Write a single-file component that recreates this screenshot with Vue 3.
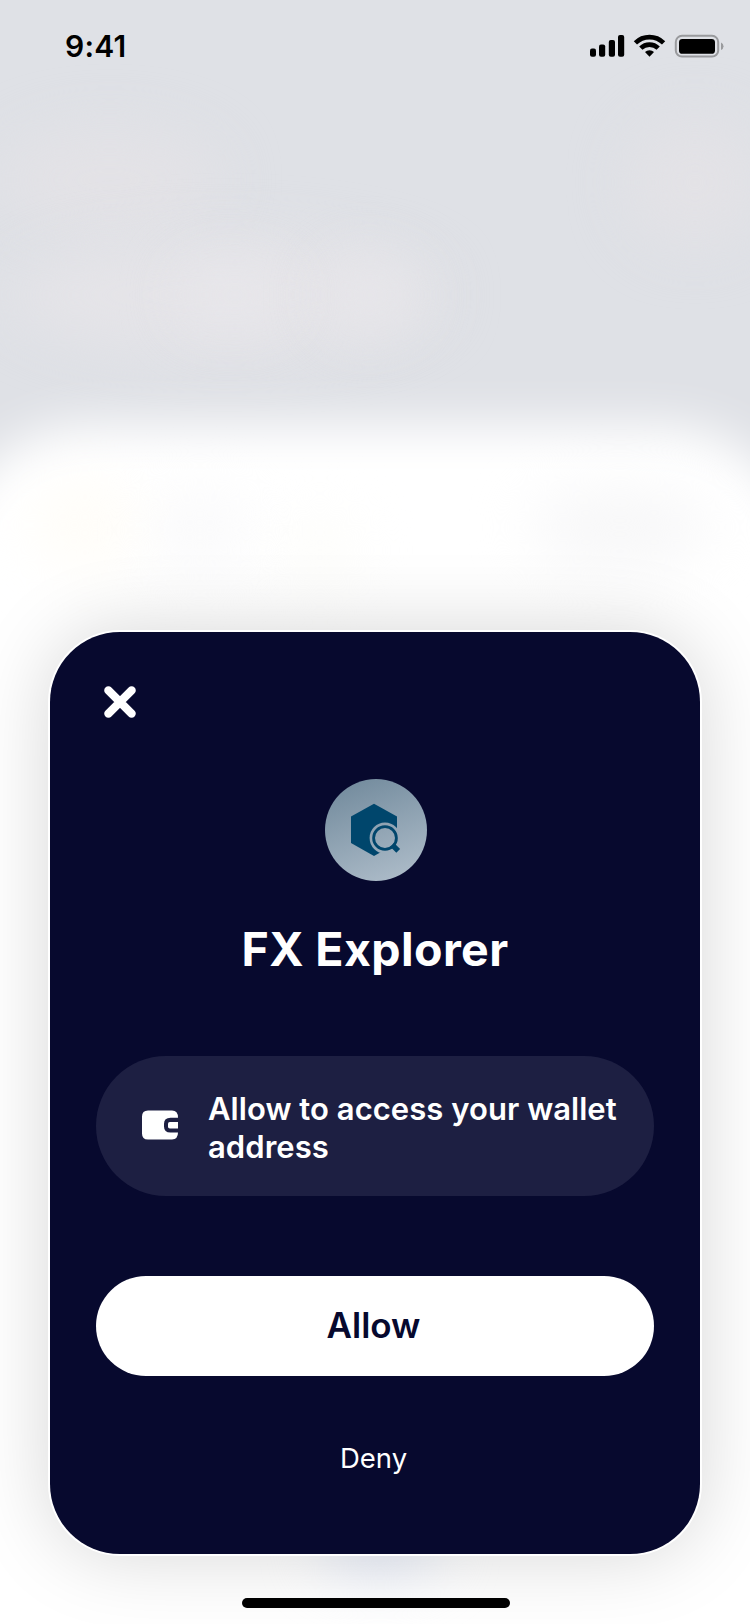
<script setup>
const title = 'FX Explorer'
</script>

<template>
  <main class="screen">
    <div class="backdrop">
      <i class="glow g1"></i><i class="glow g2"></i><i class="glow g3"></i>
      <i class="glow g4"></i><i class="glow g5"></i>
      <div class="sheet"></div>
      <i class="glow s1"></i><i class="glow s2"></i><i class="glow s3"></i><i class="glow s4"></i>
      <i class="glow s5"></i>
    </div>

    <header class="status">
      <span class="time">9:41</span>
      <svg class="indicators" width="136" height="24" viewBox="0 0 136 24">
        <rect x="0" y="14.5" width="6" height="8.2" rx="2" />
        <rect x="9" y="10.5" width="6.2" height="12.2" rx="2" />
        <rect x="18.8" y="6" width="6.2" height="16.7" rx="2" />
        <rect x="28" y="1" width="6.2" height="21.7" rx="2" />
        <g fill="none" stroke="#000" stroke-width="4.6">
          <path d="M45.4 8.9a20 20 0 0 1 28.2 0" />
          <path d="M50.8 14.2a12.3 12.3 0 0 1 17.4 0" />
        </g>
        <path d="M59.5 22.8l-4.5-4.7a6.5 6.5 0 0 1 9 0z" />
        <rect x="85.8" y="1.8" width="42.4" height="20.8" rx="6.2" fill="none" stroke="#999a9d" stroke-width="2" />
        <rect x="89" y="5" width="36" height="14.8" rx="3.4" />
        <path d="M131 8.4q2.5 1.1 2.5 3.8t-2.5 3.8z" fill="#999a9d" />
      </svg>
    </header>

    <section class="card">
      <button class="close" aria-label="Close">
        <svg width="34" height="34" viewBox="0 0 34 34">
          <path d="M5.4 5.4l23.2 23.2M28.6 5.4L5.4 28.6" stroke="#fff" stroke-width="8.4" stroke-linecap="round" />
        </svg>
      </button>
      <svg class="logo" width="102" height="102" viewBox="0 0 102 102">
        <defs>
          <linearGradient id="disc" x1="0.3" y1="0" x2="0.7" y2="1">
            <stop offset="0" stop-color="#748c9e" />
            <stop offset="1" stop-color="#acbbc8" />
          </linearGradient>
          <mask id="lens">
            <rect width="102" height="102" fill="#fff" />
            <circle cx="60" cy="59" r="15.4" fill="#000" />
            <path d="M67 66L82 82H58V72z" fill="#000" />
          </mask>
        </defs>
        <circle cx="51" cy="51" r="51" fill="url(#disc)" />
        <path d="M49 24.8L72 37.5V64L49 77L26 64V37.5z" fill="#00466c" mask="url(#lens)" />
        <circle cx="60" cy="59" r="11.4" fill="none" stroke="#00466c" stroke-width="2.8" />
        <path d="M67.2 65.8l6 6" stroke="#00466c" stroke-width="5.4" />
      </svg>
      <h1>{{ title }}</h1>

      <div class="permission">
        <svg width="36" height="30" viewBox="0 0 36 30">
          <path d="M6 .6H30Q36 .6 36 7.8H28.5Q22 7.8 22 14V16.5Q22 22.6 28.5 22.6H36Q36 29.4 30 29.4H6Q0 29.4 0 23.4V6.6Q0 .6 6 .6z" fill="#fff" />
          <path d="M36 12H27.8Q26 12 26 13.8V16.8Q26 18.6 27.8 18.6H36z" fill="#fff" />
        </svg>
        <p>Allow to access your wallet<br />address</p>
      </div>

      <button class="allow"><span>Allow</span></button>
      <button class="deny"><span>Deny</span></button>
    </section>
    <div class="home"></div>
  </main>
</template>

<style>
body { margin: 0; }
</style>

<style scoped>
.screen {
  position: relative;
  box-sizing: border-box;
  width: 750px;
  height: 1624px;
  overflow: hidden;
  background: #fff;
  font-family: Inter, "Open Sans", sans-serif;
  display: flex;
  flex-direction: column;
  align-items: center;
}
.backdrop { position: absolute; inset: 0; background: #dfe1e6; overflow: hidden; }
.sheet {
  position: absolute;
  left: -60px;
  right: -60px;
  top: 425px;
  height: 1400px;
  border-radius: 150px 150px 0 0;
  background: #fff;
  filter: blur(25px);
}
.glow { position: absolute; border-radius: 50%; filter: blur(28px); }
.g1 { left: 0; top: 130px; width: 220px; height: 100px; background: #e3e2e6; }
.g2 { left: 630px; top: 120px; width: 130px; height: 125px; background: #e3e2e6; }
.g3 { left: 10px; top: 240px; width: 430px; height: 110px; background: #e5e4e8; }
.g4 { left: 180px; top: 265px; width: 110px; height: 60px; background: #e8e7eb; }
.g5 { left: 325px; top: 260px; width: 90px; height: 70px; background: #e7e6ea; }
.s1 { left: 30px; top: 480px; width: 110px; height: 90px; background: #fffdf8; }
.s2 { left: 150px; top: 490px; width: 100px; height: 80px; background: #fafafb; }
.s3 { left: 280px; top: 515px; width: 80px; height: 70px; background: #fdfdfa; }
.s4 { left: 530px; top: 490px; width: 180px; height: 75px; background: #f7f7f8; }
.s5 { left: 320px; top: 1515px; width: 120px; height: 60px; background: #e9eefa; }
.status {
  position: relative;
  box-sizing: border-box;
  width: 100%;
  height: 92px;
  padding: 0 24px 0 65px;
  display: flex;
  justify-content: space-between;
  align-items: center;
}
.time {
  font: 600 30px/36px Inter, sans-serif;
  letter-spacing: 0.2px;
  color: #000;
}
.card {
  position: relative;
  box-sizing: border-box;
  width: 650px;
  height: 922px;
  margin-top: 540px;
  padding: 0 46px;
  border-radius: 70px;
  background: #07092e;
  box-shadow: 0 0 0 2px #fff, 0 0 80px rgba(0, 0, 0, 0.17);
  display: flex;
  flex-direction: column;
  align-items: center;
}
button { border: 0; padding: 0; background: none; font-family: inherit; }
.close { align-self: flex-start; width: 34px; height: 34px; margin: 53px 0 0 7px; }
.close svg { display: block; }
.logo { margin: 60px 0 0 2px; flex: none; }
h1 {
  margin: 36px 0 1px;
  font-size: 46.5px;
  font-weight: 700;
  letter-spacing: 0.4px;
  line-height: 64px;
  height: 64px;
  color: #fff;
  white-space: nowrap;
}
.permission {
  box-sizing: border-box;
  width: 558px;
  height: 140px;
  margin-top: 74px;
  padding: 0 0 0 46px;
  border-radius: 70px;
  background: #1d1f42;
  display: flex;
  align-items: center;
  gap: 30px;
}
.permission svg { flex: none; margin-top: -2px; }
.permission p {
  margin: 3px 0 0;
  font-size: 31px;
  font-weight: 600;
  line-height: 38px;
  letter-spacing: 0.05px;
  color: #fff;
  white-space: nowrap;
}
.allow {
  width: 558px;
  height: 100px;
  flex: none;
  margin-top: 80px;
  border-radius: 50px;
  background: #fff;
  color: #07092e;
  font-size: 35px;
  font-weight: 600;
  line-height: 98px;
  padding-bottom: 2px;
}
.allow span { margin-right: 3px; }
.deny { margin: 62px 3px 0 0; font-size: 27.5px; line-height: 40px; color: #fff; }
.home {
  position: relative;
  width: 268px;
  height: 10px;
  margin-top: 44px;
  margin-left: 2px;
  border-radius: 5px;
  background: #000;
}
</style>
